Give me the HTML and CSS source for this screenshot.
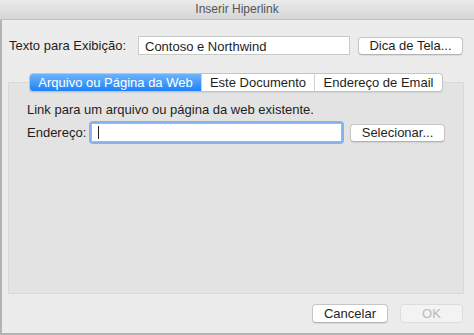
FILE: index.html
```html
<!DOCTYPE html>
<html lang="pt">
<head>
    <meta charset="UTF-8">
    <title>Inserir Hiperlink</title>
    <link rel="stylesheet" href="styles.css">
</head>
<body>
    <div class="window">
        <div class="titlebar">Inserir Hiperlink</div>

        <div class="display-row">
            <label class="display-label" for="display-text">Texto para Exibição:</label>
            <input class="field display-field" type="text" id="display-text" value="Contoso e Northwind">
            <button class="btn tip-btn">Dica de Tela...</button>
        </div>

        <div class="panel">
            <div class="tabs">
                <div class="tab tab-active tab-file">Arquivo ou Página da Web</div>
                <div class="tab tab-doc">Este Documento</div>
                <div class="tab tab-mail">Endereço de Email</div>
            </div>
            <div class="hint">Link para um arquivo ou página da web existente.</div>
            <div class="address-row">
                <label class="address-label" for="address">Endereço:</label>
                <div class="focus-ring">
                    <input class="field address-field" type="text" id="address">
                    <span class="caret"></span>
                </div>
                <button class="btn select-btn">Selecionar...</button>
            </div>
        </div>

        <div class="footer">
            <button class="btn cancel-btn">Cancelar</button>
            <button class="btn ok-btn" disabled>OK</button>
        </div>
    </div>
</body>
</html>
```

FILE: styles.css
```css
body {
    margin: 0;
    padding: 0;
    font-family: "Liberation Sans", Arial, sans-serif;
    font-size: 13px;
    color: #1e1e1e;
    background-color: #ececec;
}
.window {
    width: 474px;
    height: 335px;
    box-sizing: border-box;
    background-color: #ececec;
    box-shadow: inset 2px -2px 0 #b4b4b4;
    overflow: hidden;
}
.titlebar {
    height: 20px;
    box-sizing: border-box;
    border-bottom: 1px solid #c2c2c2;
    background: linear-gradient(#ebebeb, #d5d5d5);
    color: #555;
    font-size: 12px;
    line-height: 19px;
    text-align: center;
}
.display-row {
    display: flex;
    align-items: center;
    margin-top: 16px;
    padding-left: 9px;
    height: 19px;
}
.display-label {
    width: 129px;
}
.field {
    box-sizing: border-box;
    border: 1px solid #c9c9c9;
    background: #fff;
    font-family: inherit;
    font-size: 13px;
    color: #1e1e1e;
    padding: 1px 6px 0;
    margin: 0;
    outline: none;
}
.display-field {
    width: 212px;
    height: 19px;
}
.btn {
    box-sizing: border-box;
    height: 18px;
    padding: 0;
    margin: 0;
    border: 1px solid #c6c6c6;
    border-bottom-color: #b3b3b3;
    border-radius: 4px;
    background: #fff;
    box-shadow: 0 1px 1px rgba(0, 0, 0, 0.08);
    font-family: inherit;
    font-size: 13px;
    color: #1e1e1e;
    line-height: 16px;
}
.tip-btn {
    width: 105px;
    margin-left: 8px;
}
.panel {
    margin: 27px 0 0 8px;
    width: 456px;
    height: 212px;
    box-sizing: border-box;
    border: 1px solid #d8d8d8;
    background-color: #e3e3e3;
    padding-left: 18px;
}
.tabs {
    display: flex;
    margin: -10px 0 0 2px;
    height: 19px;
    width: max-content;
    border: 1px solid #c4c4c4;
    border-radius: 4px;
    box-sizing: border-box;
    background: #fff;
    box-shadow: 0 1px 1px rgba(0, 0, 0, 0.08);
    overflow: hidden;
}
.tab {
    box-sizing: border-box;
    height: 17px;
    line-height: 17px;
    text-align: center;
    color: #1e1e1e;
    border-left: 1px solid #d2d2d2;
}
.tab-file {
    width: 171px;
    border-left: none;
}
.tab-doc {
    width: 113px;
}
.tab-mail {
    width: 128px;
}
.tab-active {
    background: linear-gradient(#6db4fb, #1c82fa);
    color: #fff;
}
.hint {
    margin-top: 10px;
    line-height: 16px;
}
.address-row {
    display: flex;
    align-items: center;
    margin-top: 5px;
    height: 19px;
}
.address-label {
    width: 64px;
}
.focus-ring {
    position: relative;
    width: 251px;
    height: 19px;
    box-sizing: border-box;
    border-radius: 2px;
    box-shadow: 0 0 0 2px #86b3ee;
}
.address-field {
    width: 251px;
    height: 19px;
    border-color: #9fb8d8;
}
.caret {
    position: absolute;
    left: 7px;
    top: 3px;
    width: 1px;
    height: 13px;
    background: #222;
}
.select-btn {
    width: 95px;
    margin-left: 8px;
}
.footer {
    display: flex;
    justify-content: flex-end;
    gap: 12px;
    margin-top: 10px;
    padding-right: 11px;
}
.cancel-btn {
    width: 76px;
    height: 19px;
}
.ok-btn {
    width: 63px;
    height: 19px;
    color: #b9b9b9;
    background: #f3f3f3;
    border-color: #dcdcdc;
    box-shadow: none;
}
```
